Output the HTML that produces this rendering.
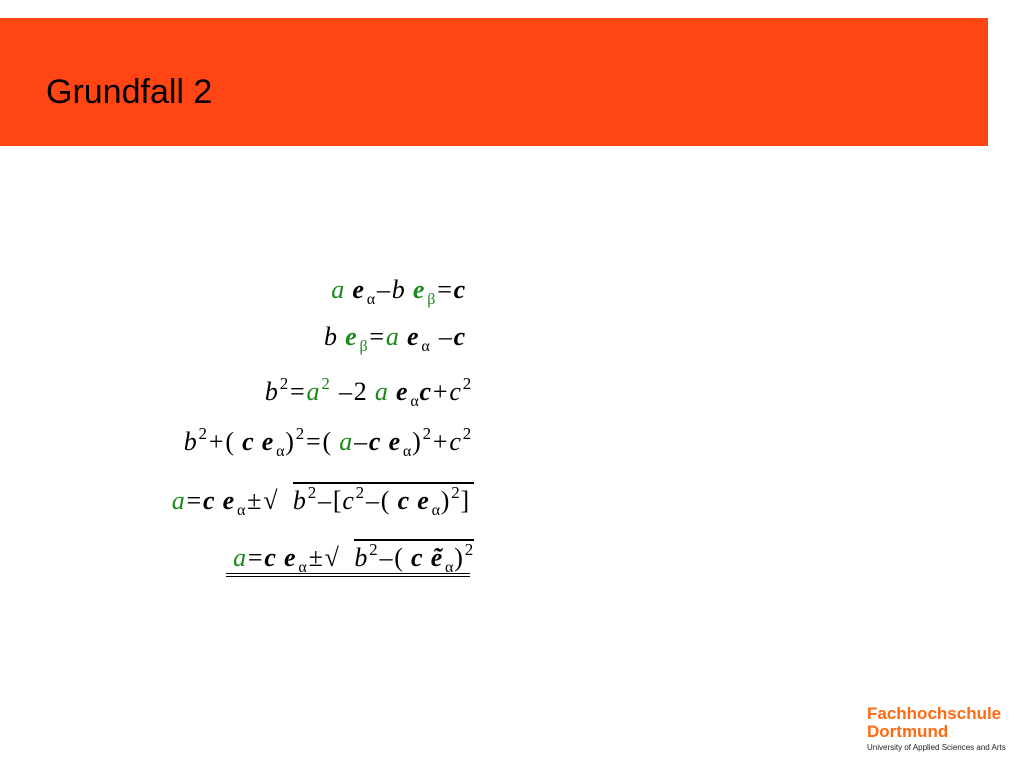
<!DOCTYPE html>
<html><head><meta charset="utf-8"><style>
body{margin:0;width:1024px;height:768px;background:#fff;position:relative;overflow:hidden;font-family:"Liberation Serif",serif}
.hdr{position:absolute;left:0;top:18px;width:988px;height:128px;background:#FF4514}
.title{position:absolute;left:46px;top:73px;font:34px "Liberation Sans",sans-serif;color:#000}
.eq{position:absolute;white-space:nowrap;font-size:26px;line-height:30px;color:#000;letter-spacing:0.8px}
i{font-style:italic}
b{font-style:italic;font-weight:bold}
.g{color:#1a8a1a}
.o{margin:0 1px}
sub{font-size:16px;vertical-align:-6px;font-style:normal;font-weight:normal;margin-left:2px}
sup{font-size:17px;vertical-align:11px;margin-left:1px}
.ov{border-top:2px solid #000;padding-top:2px}
.logo{position:absolute;left:867px;top:705px;font-family:"Liberation Sans",sans-serif}
</style></head><body>
<div class="hdr"></div>
<div class="title">Grundfall 2</div>

<div class="eq" style="right:558px;top:275px"><i class="g">a</i> <b>e</b><sub>α</sub><span class="o">–</span><i>b</i> <b class="g">e</b><sub class="g">β</sub><span class="o">=</span><b>c</b></div>
<div class="eq" style="right:558px;top:322px"><i>b</i> <b class="g">e</b><sub class="g">β</sub><span class="o">=</span><i class="g">a</i> <b>e</b><sub>α</sub> <span class="o">–</span><b>c</b></div>
<div class="eq" style="right:552px;top:369px"><i>b</i><sup>2</sup><span class="o">=</span><i class="g">a</i><sup class="g">2</sup> <span class="o">–</span>2 <i class="g">a</i> <b>e</b><sub>α</sub><b>c</b><span class="o">+</span><i>c</i><sup>2</sup></div>
<div class="eq" style="right:552px;top:419px"><i>b</i><sup>2</sup><span class="o">+</span>( <b>c</b> <b>e</b><sub>α</sub>)<sup>2</sup><span class="o">=</span>( <i class="g">a</i><span class="o">–</span><b>c</b> <b>e</b><sub>α</sub>)<sup>2</sup><span class="o">+</span><i>c</i><sup>2</sup></div>
<div class="eq" style="right:550px;top:478px"><i class="g">a</i><span class="o">=</span><b>c</b> <b>e</b><sub>α</sub><span class="o">±</span>√&nbsp; <span class="ov" style="padding-right:4px"><i>b</i><sup>2</sup><span class="o">–</span>[<i>c</i><sup>2</sup><span class="o">–</span>( <b>c</b> <b>e</b><sub>α</sub>)<sup>2</sup>]</span></div>
<div class="eq" style="right:550px;top:535px"><i class="g">a</i><span class="o">=</span><b>c</b> <b>e</b><sub>α</sub><span class="o">±</span>√&nbsp; <span class="ov"><i>b</i><sup>2</sup><span class="o">–</span>( <b>c</b> <b>ẽ</b><sub>α</sub>)<sup>2</sup></span></div>
<div style="position:absolute;left:226px;top:573px;width:244px;border-top:1px solid #000;border-bottom:1px solid #000;height:2px"></div>

<div class="logo">
<div style="color:#FF6A13;font-size:17px;font-weight:bold;line-height:18px">Fachhochschule</div>
<div style="color:#FF6A13;font-size:17px;font-weight:bold;line-height:18px">Dortmund</div>
<div style="color:#222;font-size:8px;line-height:13px">University of Applied Sciences and Arts</div>
</div>
</body></html>
